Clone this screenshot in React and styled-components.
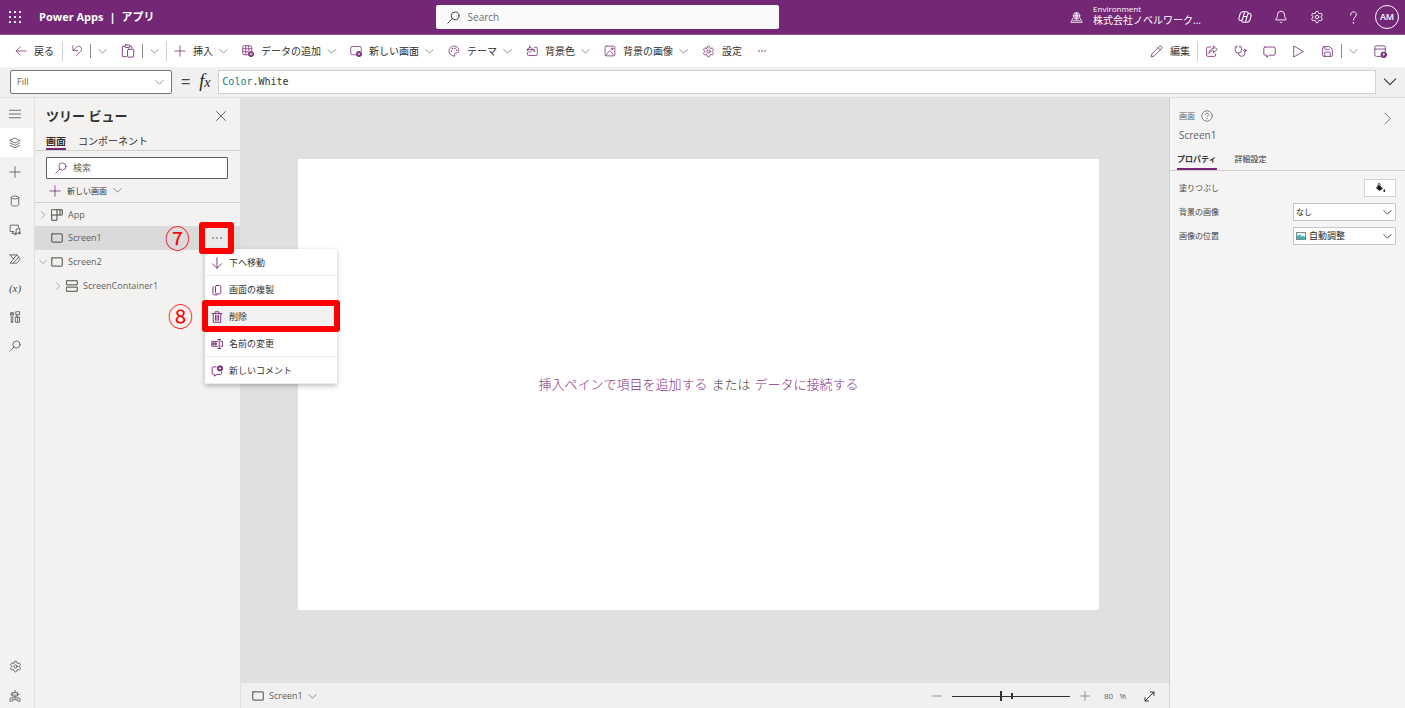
import React, { useState } from 'react';
import styled, { createGlobalStyle } from 'styled-components';
import { Bell, Palette, Pencil, Save, Settings, Stethoscope } from 'lucide-react';

const GlobalStyle = createGlobalStyle`
  *, *::before, *::after {
    box-sizing: border-box;
  }

  body {
    margin: 0;
    font-family: "Open Sans", "Noto Sans CJK JP", sans-serif;
    font-size: 9px;
    line-height: 14px;
    color: #323130;
  }

  button, input, select {
    margin: 0;
    padding: 0;
    border: 0;
    background: none;
    font: inherit;
    color: inherit;
  }

  button {
    display: flex;
    align-items: center;
    white-space: nowrap;
    cursor: pointer;
  }

  a {
    text-decoration: none;
  }

  svg {
    display: block;
    flex: none;
  }
`;

const purple = '#742774';

/* ---------- icons, drawn on a 16 unit grid ---------- */

const Svg = styled.svg`
  fill: none;
  stroke: ${({ $color }) => $color || 'currentColor'};
  stroke-width: ${({ $weight }) => $weight || 1};
  stroke-linecap: round;
  stroke-linejoin: round;
`;

const shapes = {
  back: <path d="M15 8H1.500M7 2.500 1.500 8 7 13.500" />,
  undo: <path d="M2.500 1v6.500H9M2.800 7.200 7 3c2-1.800 4.500-1.800 6 0s1.300 4.200-.5 6L7 14.500" />,
  paste: (
    <>
      <path d="M6 14.500H2.500a1 1 0 0 1-1-1v-10a1 1 0 0 1 1-1H4m6 0h1.500a1 1 0 0 1 1 1V5" />
      <rect x="4.500" y="1" width="5.500" height="3" rx="1" />
      <rect x="7.500" y="6" width="7" height="9" rx="1" />
    </>
  ),
  plus: <path d="M8 1v14M1 8h14" />,
  minus: <path d="M1 8h14" />,
  table: (
    <>
      <path d="M8 13H3a2 2 0 0 1-2-2V3a2 2 0 0 1 2-2h8a2 2 0 0 1 2 2v5M1 5h12M1 9h7M5 1v12M9 1v7" />
      <circle cx="12" cy="12" r="3.500" fill="currentColor" />
      <path d="M12 10.300v3.400M10.300 12h3.400" stroke="#fff" />
    </>
  ),
  screenAdd: (
    <>
      <path d="M8 13H3a2 2 0 0 1-2-2V4a2 2 0 0 1 2-2h10a2 2 0 0 1 2 2v4" />
      <circle cx="12" cy="12" r="3.500" fill="currentColor" />
      <path d="M12 10.800v2.400M10.800 12h2.400" stroke="#fff" />
    </>
  ),
  publish: (
    <>
      <path d="M8 14H3a2 2 0 0 1-2-2V3a2 2 0 0 1 2-2h9a2 2 0 0 1 2 2v5M1 5h13" />
      <circle cx="12" cy="12" r="3.500" fill="currentColor" />
      <path d="M12 13.600v-3M10.700 11.700 12 10.400l1.300 1.300" stroke="#fff" />
    </>
  ),
  fillColor: (
    <>
      <path d="M11 3h3a1 1 0 0 1 1 1v9a1 1 0 0 1-1 1H3a1 1 0 0 1-1-1v-3" />
      <path d="M5 1v3M1.500 6 5.500 2.500l4 3.500-4 3.500zM1.500 6h8M11 6.500c1 1.300 1 2.500 0 2.500s-1-1.200 0-2.500z" />
    </>
  ),
  image: (
    <>
      <rect x="1.500" y="1.500" width="13" height="13" rx="1.500" />
      <path d="m2.500 14 4-5.500a1.500 1.500 0 0 1 2.500 0l4 5.500" />
      <circle cx="10.800" cy="5" r="1.200" />
    </>
  ),
  share: (
    <>
      <path d="M7 2.500H3.500A1.500 1.500 0 0 0 2 4v8.500A1.500 1.500 0 0 0 3.500 14h8a1.500 1.500 0 0 0 1.500-1.500V11" />
      <path d="M10.500 1.500 15 5.500l-4.500 4V7C7.500 7 6 8 5 10.500 5 7 7 4.300 10.500 4z" />
    </>
  ),
  comment: <path d="M2.500 2.500h11a1.500 1.500 0 0 1 1.500 1.500v7a1.500 1.500 0 0 1-1.500 1.500H8L4.500 15v-2.500h-2A1.500 1.500 0 0 1 1 11V4a1.500 1.500 0 0 1 1.500-1.500z" />,
  play: <path d="M2.500 1.500 14 8 2.500 14.500z" />,
  search: (
    <>
      <circle cx="10" cy="6" r="4.800" />
      <path d="M6.500 9.500 1 15" />
    </>
  ),
  close: <path d="m2 2 12 12M14 2 2 14" />,
  chevron: <path d="M1.500 4.500 8 11l6.500-6.500" />,
  chevronRight: <path d="M5 1.500 11.500 8 5 14.500" />,
  environment: (
    <>
      <circle cx="8" cy="6" r="4" />
      <path d="M4 6h8M8 2v8M8 2C5.800 4 5.800 8 8 10M8 2c2.200 2 2.200 6 0 8" />
      <path d="M3.500 9 1 14h14l-2.500-5M3.500 12h9" />
    </>
  ),
  copilot: (
    <>
      <path d="M4.500 12H3.200C1.500 12 .6 10.500 1.100 9l1.500-5C3.200 2.500 4.300 2 5.800 2H10c1 0 1.500.6 1.800 1.500L12 4" />
      <path d="M11.500 4h1.300c1.700 0 2.600 1.500 2.100 3l-1.500 5c-.6 1.500-1.700 2-3.200 2H6c-1 0-1.500-.6-1.800-1.500L4 12" />
      <path d="M7.500 2.200 5.300 10c-.4 1.300-1 2-2 2M8.500 13.800 10.700 6c.4-1.300 1-2 2-2M6 7.500h4" />
    </>
  ),
  help: (
    <>
      <path d="M4.500 5C4.500 2.500 6 1 8 1s3.500 1.500 3.500 3.500c0 3-3.500 3-3.500 6.500" />
      <path d="M8 14.500v.2" strokeWidth="1.800" />
    </>
  ),
  menu: <path d="M.5 3h15M.5 8h15M.5 13h15" />,
  layers: <path d="m8 1.500 6.500 3.200L8 8 1.500 4.700zM1.500 8 8 11.200 14.500 8M1.500 11.200 8 14.500l6.500-3.300" />,
  data: (
    <>
      <ellipse cx="8" cy="3.300" rx="5" ry="2" />
      <path d="M3 3.300v9.500c0 1.100 2.200 1.900 5 1.900s5-.8 5-1.900V3.300" />
    </>
  ),
  media: (
    <>
      <path d="M6 10H1.500V1.500h11V5M4 12.500h2M5 10v2.500" />
      <path d="M9.500 13V7l5-1v6" />
      <circle cx="8.300" cy="13.200" r="1.300" />
      <circle cx="13.300" cy="12.200" r="1.300" />
    </>
  ),
  flow: <path d="M1.500 2.500h9L15 8l-4.500 5.500h-9L10.500 2.500M1.500 2.500 6 8M5.500 13.500 13 5.500" />,
  tools: (
    <>
      <path d="M3 15V7C1.500 6 1.500 3 3 1.500V5h2V1.500C6.500 3 6.500 6 5 7v8z" />
      <path d="M9 1.500V5h5V1.500zM10.500 5v3M9 8h5v7H9zM11.500 8v7" />
    </>
  ),
  agent: (
    <>
      <path d="M8 .5v2.500M4.500 3.500h7V8h-7zM2.500 5.700h2M11.500 5.700h2M6.500 5.700v.2M9.500 5.700v.2M8 8v2.500" />
      <path d="M1.500 15.500v-4a1 1 0 0 1 1-1h11a1 1 0 0 1 1 1v4M4 15.500V13h8v2.500" />
    </>
  ),
  app: <path d="M1 1h14v7H1zM1 8v7h7V1M12 1v7" />,
  screen: <rect x="1" y="2.500" width="14" height="11" rx=".5" />,
  container: <path d="M1 1h14v5.500H1zM1 9.500h14V15H1z" />,
  down: <path d="M8 1v14M2 9l6 6 6-6" />,
  copy: (
    <>
      <rect x="6" y="2" width="7" height="11" rx="1.500" />
      <path d="M4 3.500c-1 0-1.500.8-1.500 1.500v7.500a2 2 0 0 0 2 2H8" />
    </>
  ),
  trash: <path d="M1.500 3.500h13M5.500 3.500V1h5v2.500M3 3.500V15h10V3.500M6 6v6.500M8 6v6.500M10 6v6.500" />,
  rename: <path d="M9 4.500H1v6.500h8M3 6.500h4v2.500H3zM3 7.700h4M9 2h4M11 2v12M9 14h4M13 4.500h2.300V11H13" />,
  commentAdd: (
    <>
      <path d="M7 2.500H3A1.500 1.500 0 0 0 1.500 4v7A1.500 1.500 0 0 0 3 12.500h1.500V15L8 12.500h4.500A1.500 1.500 0 0 0 14 11V9.500" />
      <circle cx="12" cy="4.500" r="3.500" fill="currentColor" />
      <path d="M12 3.300v2.400M10.800 4.500h2.400" stroke="#fff" />
    </>
  ),
  info: (
    <>
      <circle cx="8" cy="8" r="7" />
      <path d="M6 6.300c0-1.300.9-2 2-2s2 .7 2 1.800c0 1.400-2 1.500-2 3.200M8 11.500v.2" />
    </>
  ),
  expand: <path d="M1.500 14.500 14.500 1.500M9.500 1.500h5v5M1.500 9.500v5h5" />,
};

const Icon = ({ name, size = 12, color, weight }) => (
  <Svg width={size} height={size} viewBox="0 0 16 16" $color={color} $weight={weight} color={color} aria-hidden="true">
    {shapes[name]}
  </Svg>
);

const Chevron = () => <Icon name="chevron" size={9} color="#605e5c" weight={1.2} />;

/* ---------- header ---------- */

const Page = styled.div`
  display: flex;
  flex-direction: column;
  min-height: 100vh;
  background: #f3f2f1;
`;

const Header = styled.header`
  display: grid;
  grid-template-columns: 31% 343px 1fr;
  align-items: center;
  height: 35px;
  background: ${purple};
  border-bottom: 1px solid #8f4b8f;
  color: #fff;
`;

const Brand = styled.div`
  display: flex;
  align-items: center;
  gap: 18px;
  padding-left: 9px;
`;

const BrandText = styled.span`
  display: flex;
  gap: 6px;
  font-size: 11px;
  font-weight: 700;
`;

const WaffleSvg = styled.svg`
  fill: #fff;
`;

const SearchBox = styled.label`
  display: flex;
  align-items: center;
  gap: 8px;
  height: 24px;
  padding: 0 11px;
  border-radius: 2px;
  background: #fafafa;
  color: #242424;
  font-size: 10px;

  input {
    flex: 1;
    min-width: 0;
    outline: none;
  }

  input::placeholder {
    color: #707070;
    opacity: 1;
  }
`;

const HeaderTools = styled.div`
  display: flex;
  align-items: center;
  justify-content: flex-end;
  padding-right: 6px;
`;

const Environment = styled.button`
  gap: 10px;
  margin-right: 26px;
  text-align: left;
`;

const EnvironmentText = styled.span`
  display: flex;
  flex-direction: column;
  padding-bottom: 4px;
  font-size: 10px;
  line-height: 12px;

  small {
    font-size: 8px;
    line-height: 10px;
  }
`;

const HeaderButton = styled.button`
  justify-content: center;
  width: 36px;
  height: 34px;
`;

const Avatar = styled.button`
  justify-content: center;
  width: 24px;
  height: 24px;
  margin-left: 4px;
  border: 1px solid #fff;
  border-radius: 50%;
  font-size: 9px;
  font-weight: 600;
`;

/* ---------- command bar ---------- */

const CommandBar = styled.nav`
  display: flex;
  align-items: center;
  height: 32px;
  padding: 0 18px 0 15px;
  background: #fff;
  color: ${purple};
`;

const CommandGroup = styled.div`
  display: flex;
  align-items: center;
  gap: ${({ $gap }) => $gap}px;
  margin-left: ${({ $end }) => ($end ? 'auto' : '0')};
`;

const Command = styled.button`
  color: ${purple};
  font-size: 10px;

  span {
    margin: 0 6px 0 7px;
    color: #323130;
  }

  span:last-child {
    margin-right: 0;
  }
`;

const Divider = styled.i`
  flex: none;
  width: 1px;
  height: ${({ $short }) => ($short ? 14 : 20)}px;
  margin: 0 ${({ $space }) => $space || 0}px;
  background: ${({ $short }) => ($short ? '#8a8886' : '#d2d0ce')};
`;

/* ---------- formula bar ---------- */

const FormulaBar = styled.div`
  display: flex;
  align-items: center;
  height: 31px;
  padding: 0 8px 0 10px;
  background: #f0f0f0;
  border-bottom: 1px solid #e1dfdd;
`;

const SelectBox = styled.div`
  display: grid;
  align-items: center;
  width: ${({ $width }) => $width}px;
  height: ${({ $height }) => $height}px;
  border: 1px solid ${({ $border }) => $border};
  border-radius: ${({ $radius }) => $radius || 0}px;
  background: #fff;

  > * {
    grid-area: 1 / 1;
  }

  > svg {
    justify-self: end;
    margin-right: ${({ $inset }) => $inset}px;
    pointer-events: none;
  }

  > svg:first-child {
    justify-self: start;
    margin-left: 2px;
  }
`;

const Select = styled.select`
  width: 100%;
  height: 100%;
  padding-left: ${({ $pad }) => $pad}px;
  appearance: none;
  color: ${({ $muted }) => ($muted ? '#605e5c' : '#201f1e')};
  font-size: ${({ $small }) => ($small ? 8 : 9)}px;
`;

const Equals = styled.span`
  margin: 0 9px;
  font-family: "Liberation Sans", sans-serif;
  font-size: 16px;
  color: #484644;
`;

const Fx = styled.span`
  width: 19px;
  font-family: "Liberation Serif", serif;
  font-size: 18px;
  font-style: italic;
  color: #201f1e;

  small {
    font-size: 14px;
  }
`;

const Formula = styled.div`
  display: grid;
  flex: 1;
  align-items: center;
  height: 24px;
  padding: 0 3px;
  border: 1px solid #d2d0ce;
  background: #fffffe;
  font-family: "DejaVu Sans Mono", monospace;
  font-size: 10px;

  > * {
    grid-area: 1 / 1;
  }

  input {
    color: transparent;
    caret-color: #323130;
    outline: none;
  }
`;

const Highlight = styled.span`
  pointer-events: none;
  white-space: pre;

  b {
    font-weight: 400;
    color: #098080;
  }
`;

const ExpandFormula = styled.button`
  margin-left: 7px;
`;

/* ---------- left side ---------- */

const Body = styled.div`
  display: flex;
  flex: 1;
`;

const Rail = styled.nav`
  display: flex;
  flex-direction: column;
  justify-content: space-between;
  width: 35px;
  border-right: 1px solid #e1dfdd;
`;

const RailGroup = styled.div`
  display: flex;
  flex-direction: column;
  padding-top: 1px;
  gap: ${({ $gap }) => $gap || 0}px;
`;

const RailButton = styled.button`
  justify-content: center;
  width: 33px;
  height: ${({ $small }) => ($small ? 24 : 29)}px;
  padding-right: 3px;
  background: ${({ $active }) => ($active ? '#fff' : 'none')};
  color: #484644;
`;

const Variable = styled.span`
  font-family: "Liberation Serif", serif;
  font-size: 11px;
  font-style: italic;
`;

const TreePanel = styled.aside`
  width: 206px;
  border-right: 1px solid #e1dfdd;
`;

const TreeTitle = styled.div`
  display: flex;
  align-items: center;
  justify-content: space-between;
  height: 36px;
  padding: 0 13px 0 11px;

  h2 {
    margin: 0;
    font-size: 13px;
    font-weight: 700;
  }
`;

const Tabs = styled.div`
  display: flex;
  gap: ${({ $gap }) => $gap}px;
  padding-left: ${({ $pad }) => $pad}px;
  border-bottom: 1px solid #d2d0ce;
`;

const Tab = styled.button`
  height: ${({ $tall }) => ($tall ? 20 : 16)}px;
  border-bottom: 2px solid ${({ $active }) => ($active ? purple : 'transparent')};
  font-size: ${({ $tall }) => ($tall ? 8 : 10)}px;
  font-weight: ${({ $active }) => ($active ? 700 : 400)};
`;

const TreeSearch = styled.label`
  display: flex;
  align-items: center;
  gap: 6px;
  height: 22px;
  margin: 6px 12px 0 11px;
  padding: 0 8px;
  border: 1px solid #605e5c;
  border-radius: 1px;
  background: #fff;

  input {
    flex: 1;
    min-width: 0;
    outline: none;
  }

  input::placeholder {
    color: #605e5c;
    opacity: 1;
  }
`;

const NewScreen = styled.button`
  gap: 6px;
  height: 23px;
  padding-left: 14px;
  font-size: 8px;
`;

const TreeList = styled.ul`
  margin: 0;
  padding: 0;
  border-top: 1px solid #d2d0ce;
  list-style: none;
`;

const TreeRow = styled.li`
  display: flex;
  align-items: center;
  gap: 4px;
  height: ${({ $first }) => ($first ? 23 : 24)}px;
  padding: 0 12px 0 ${({ $level }) => 4 + $level * 15}px;
  background: ${({ $active }) => ($active ? '#dadada' : 'none')};
  color: #605e5c;
`;

const Twisty = styled.span`
  width: 8px;
`;

const TreeName = styled.span`
  flex: 1;
  margin-left: 1px;
`;

const MoreAnchor = styled.div`
  position: relative;
  z-index: 2;
`;

const MoreButton = styled.button`
  justify-content: center;
  width: 23px;
  height: 20px;
  background: #ebebeb;
`;

const Menu = styled.ul`
  position: absolute;
  top: 21px;
  left: 0;
  width: 132px;
  margin: 0;
  padding: 0;
  background: #fff;
  box-shadow: 0 2px 5px rgba(0, 0, 0, 0.25);
  list-style: none;
`;

const MenuItem = styled.li`
  position: relative;
  border-bottom: 1px solid #edebe9;
  background: ${({ $active }) => ($active ? '#f3f2f1' : 'none')};

  button {
    gap: 6px;
    width: 100%;
    height: 26px;
    padding: 1px 0 0 6px;
    color: ${purple};
  }

  span {
    color: #323130;
  }
`;

const Callout = styled.div`
  position: absolute;
  inset: -${({ $spread }) => $spread}px;
  z-index: 3;
  border: 6px solid #f00;
  border-radius: 3px;
  pointer-events: none;
`;

const CalloutNumber = styled.strong`
  position: absolute;
  right: calc(100% + 15px);
  bottom: calc(50% - 12px);
  font-family: "Noto Sans CJK JP", sans-serif;
  font-size: 25px;
  font-weight: 400;
  line-height: 26px;
  color: #f00;
`;

/* ---------- canvas ---------- */

const Stage = styled.main`
  display: flex;
  flex: 1;
  flex-direction: column;
  min-width: 0;
  background: #e0e0e0;
`;

const Board = styled.div`
  flex: 1;
  padding: 61px 70px 20px 57px;
`;

const Artboard = styled.section`
  display: flex;
  align-items: center;
  justify-content: center;
  gap: 4px;
  aspect-ratio: 16 / 9;
  background: #fff;
  font-size: 13px;
  font-weight: 300;
  color: #484644;

  a {
    color: #8a2f8a;
  }
`;

const StatusBar = styled.footer`
  display: flex;
  align-items: center;
  justify-content: space-between;
  height: 25px;
  padding: 1px 14px 0 11px;
  background: #f0f0f0;
  color: #605e5c;
`;

const ScreenPicker = styled.button`
  gap: 5px;
`;

const Zoom = styled.div`
  display: flex;
  align-items: center;
  gap: 10px;
`;

const ZoomTrack = styled.div`
  position: relative;
  display: flex;
  width: 118px;

  &::after {
    content: "";
    position: absolute;
    top: 5px;
    left: 50%;
    width: 2px;
    height: 6px;
    background: #323130;
  }

  input {
    width: 100%;
    height: 16px;
    appearance: none;
  }

  input::-webkit-slider-runnable-track {
    height: 1px;
    background: #323130;
  }

  input::-webkit-slider-thumb {
    width: 2px;
    height: 10px;
    margin-top: -5px;
    appearance: none;
    background: #323130;
  }
`;

const ZoomValue = styled.output`
  margin: 0 8px 0 4px;
  font-size: 8px;
  white-space: pre;
`;

/* ---------- properties ---------- */

const Properties = styled.aside`
  width: 236px;
  border-left: 1px solid #d2d0ce;
  background: #f4f4f4;
`;

const PropertiesHead = styled.div`
  display: flex;
  align-items: flex-start;
  justify-content: space-between;
  height: 52px;
  padding: 11px 11px 0 9px;
  color: #605e5c;
`;

const Kind = styled.div`
  display: flex;
  align-items: center;
  gap: 6px;
  font-size: 8px;
`;

const Selected = styled.div`
  margin-top: 5px;
  font-size: 10px;
`;

const Collapse = styled.button`
  margin-top: 3px;
`;

const Field = styled.div`
  display: flex;
  align-items: center;
  justify-content: space-between;
  height: 24px;
  padding: 0 9px;

  > label, > span {
    font-size: 8px;
    color: #484644;
  }
`;

const Fields = styled.div`
  padding-top: 5px;
`;

const Swatch = styled.button`
  justify-content: center;
  width: 32px;
  height: 18px;
  border: 1px solid #d2d0ce;
  background: #fff;
`;

const commands = [
  { label: '挿入', icon: <Icon name="plus" />, menu: true },
  { label: 'データの追加', icon: <Icon name="table" />, menu: true },
  { label: '新しい画面', icon: <Icon name="screenAdd" />, menu: true },
  { label: 'テーマ', icon: <Palette size={12} strokeWidth={1.5} />, menu: true },
  { label: '背景色', icon: <Icon name="fillColor" />, menu: true },
  { label: '背景の画像', icon: <Icon name="image" />, menu: true },
  { label: '設定', icon: <Settings size={13} strokeWidth={1.5} /> },
];

const railItems = [
  ['メニュー', 'menu'],
  ['ツリー ビュー', 'layers'],
  ['挿入', 'plus'],
  ['データ', 'data'],
  ['メディア', 'media'],
  ['Power Automate', 'flow'],
  ['変数', null],
  ['高度なツール', 'tools'],
  ['検索', 'search'],
];

const menuItems = [
  ['下へ移動', 'down'],
  ['画面の複製', 'copy'],
  ['削除', 'trash'],
  ['名前の変更', 'rename'],
  ['新しいコメント', 'commentAdd'],
];

const Dots = ({ color = purple, gap = 4 }) => (
  <svg width="12" height="4" viewBox="0 0 12 4" fill={color} aria-hidden="true">
    {[-1, 0, 1].map(n => <circle key={n} cx={6 + n * gap} cy="2" r=".8" />)}
  </svg>
);

const Waffle = () => (
  <WaffleSvg width="12" height="12" viewBox="0 0 12 12" aria-hidden="true">
    {[0, 5, 10].map(y => [0, 5, 10].map(x => <rect key={`${x}-${y}`} x={x} y={y} width="2" height="2" rx=".6" />))}
  </WaffleSvg>
);

const TopBar = () => (
  <Header>
    <Brand>
      <button aria-label="アプリ起動ツール"><Waffle /></button>
      <BrandText><span>Power Apps</span><span>|</span><span>アプリ</span></BrandText>
    </Brand>
    <SearchBox>
      <Icon name="search" size={13} />
      <input type="search" placeholder="Search" aria-label="Search" />
    </SearchBox>
    <HeaderTools>
      <Environment>
        <Icon name="environment" size={13} />
        <EnvironmentText>
          <small>Environment</small>
          株式会社ノベルワーク...
        </EnvironmentText>
      </Environment>
      <HeaderButton aria-label="Copilot"><Icon name="copilot" size={14} weight={1.2} /></HeaderButton>
      <HeaderButton aria-label="通知"><Bell size={14} strokeWidth={1.6} /></HeaderButton>
      <HeaderButton aria-label="設定"><Settings size={14} strokeWidth={1.6} /></HeaderButton>
      <HeaderButton aria-label="ヘルプ"><Icon name="help" size={13} weight={1.2} /></HeaderButton>
      <Avatar>AM</Avatar>
    </HeaderTools>
  </Header>
);

const Commands = () => (
  <CommandBar>
    <CommandGroup $gap={14}>
      <CommandGroup $gap={8}>
        <Command><Icon name="back" /><span>戻る</span></Command>
        <Divider />
        <CommandGroup $gap={7}>
          <Command aria-label="元に戻す"><Icon name="undo" /></Command>
          <Divider $short />
          <Command aria-label="元に戻す オプション"><Chevron /></Command>
        </CommandGroup>
      </CommandGroup>
      <CommandGroup $gap={7}>
        <Command aria-label="貼り付け"><Icon name="paste" size={14} /></Command>
        <Divider $short />
        <Command aria-label="貼り付け オプション"><Chevron /></Command>
      </CommandGroup>
    </CommandGroup>
    <Divider $space={7} />
    <CommandGroup $gap={14}>
      {commands.map(({ label, icon, menu }) => (
        <Command key={label}>{icon}<span>{label}</span>{menu && <Chevron />}</Command>
      ))}
      <Command aria-label="その他"><Dots gap={3} /></Command>
    </CommandGroup>
    <CommandGroup $gap={16} $end>
      <CommandGroup $gap={7}>
        <Command><Pencil size={13} strokeWidth={1.5} /><span>編集</span></Command>
        <Divider />
        <Command aria-label="共有"><Icon name="share" size={13} /></Command>
      </CommandGroup>
      <Command aria-label="アプリ チェッカー"><Stethoscope size={13} strokeWidth={1.5} /></Command>
      <Command aria-label="コメント"><Icon name="comment" size={13} /></Command>
      <Command aria-label="プレビュー"><Icon name="play" size={13} /></Command>
      <CommandGroup $gap={7}>
        <Command aria-label="保存"><Save size={13} strokeWidth={1.5} /></Command>
        <Divider $short />
        <Command aria-label="保存 オプション"><Chevron /></Command>
      </CommandGroup>
      <Command aria-label="公開"><Icon name="publish" size={13} /></Command>
    </CommandGroup>
  </CommandBar>
);

const FormulaRow = () => {
  const [formula, setFormula] = useState('Color.White');
  const [head, ...rest] = formula.split('.');

  return (
    <FormulaBar>
      <SelectBox $width={162} $height={24} $border="#797775" $radius={2} $inset={7}>
        <Select $pad={6} $muted aria-label="プロパティ" defaultValue="Fill">
          <option>Fill</option>
        </Select>
        <Chevron />
      </SelectBox>
      <Equals>=</Equals>
      <Fx>f<small>x</small></Fx>
      <Formula>
        <input aria-label="数式" value={formula} onChange={e => setFormula(e.target.value)} />
        <Highlight aria-hidden="true"><b>{head}</b>{rest.length > 0 && `.${rest.join('.')}`}</Highlight>
      </Formula>
      <ExpandFormula aria-label="数式バーの展開"><Icon name="chevron" size={14} weight={1.2} /></ExpandFormula>
    </FormulaBar>
  );
};

const ScreenMenu = () => (
  <Menu>
    {menuItems.map(([label, icon]) => (
      <MenuItem key={label} $active={icon === 'trash'}>
        <button><Icon name={icon} size={12} weight={1.2} /><span>{label}</span></button>
        {icon === 'trash' && <Callout $spread={3}><CalloutNumber>⑧</CalloutNumber></Callout>}
      </MenuItem>
    ))}
  </Menu>
);

const TreeView = () => (
  <TreePanel>
    <TreeTitle>
      <h2>ツリー ビュー</h2>
      <button aria-label="閉じる"><Icon name="close" size={12} /></button>
    </TreeTitle>
    <Tabs $gap={12} $pad={11}>
      <Tab $active>画面</Tab>
      <Tab>コンポーネント</Tab>
    </Tabs>
    <TreeSearch>
      <Icon name="search" size={12} color={purple} />
      <input type="search" placeholder="検索" aria-label="検索" />
    </TreeSearch>
    <NewScreen><Icon name="plus" color={purple} />新しい画面<Chevron /></NewScreen>
    <TreeList>
      <TreeRow $level={0} $first>
        <Twisty><Icon name="chevronRight" size={8} /></Twisty>
        <Icon name="app" weight={1.3} color="#484644" />
        <TreeName>App</TreeName>
      </TreeRow>
      <TreeRow $level={0} $active>
        <Twisty />
        <Icon name="screen" weight={1.3} color="#484644" />
        <TreeName>Screen1</TreeName>
        <MoreAnchor>
          <MoreButton aria-label="その他"><Dots color="#484644" /></MoreButton>
          <ScreenMenu />
          <Callout $spread={6}><CalloutNumber>⑦</CalloutNumber></Callout>
        </MoreAnchor>
      </TreeRow>
      <TreeRow $level={0}>
        <Twisty><Icon name="chevron" size={8} /></Twisty>
        <Icon name="screen" weight={1.3} color="#484644" />
        <TreeName>Screen2</TreeName>
      </TreeRow>
      <TreeRow $level={1}>
        <Twisty><Icon name="chevronRight" size={8} /></Twisty>
        <Icon name="container" weight={1.3} color="#484644" />
        <TreeName>ScreenContainer1</TreeName>
      </TreeRow>
    </TreeList>
  </TreePanel>
);

const CanvasArea = () => (
  <Stage>
    <Board>
      <Artboard>
        <a href="#insert">挿入ペインで項目を追加する</a>
        <span>または</span>
        <a href="#data">データに接続する</a>
      </Artboard>
    </Board>
    <StatusBar>
      <ScreenPicker><Icon name="screen" weight={1.3} color="#484644" />Screen1<Chevron /></ScreenPicker>
      <Zoom>
        <button aria-label="縮小"><Icon name="minus" size={10} /></button>
        <ZoomTrack>
          <input type="range" aria-label="ズーム" min="0" max="192" defaultValue="80" />
        </ZoomTrack>
        <button aria-label="拡大"><Icon name="plus" size={10} /></button>
        <ZoomValue>{'80   %'}</ZoomValue>
        <button aria-label="画面に合わせる"><Icon name="expand" size={11} color="#201f1e" weight={1.3} /></button>
      </Zoom>
    </StatusBar>
  </Stage>
);

const PropertyPane = () => (
  <Properties>
    <PropertiesHead>
      <div>
        <Kind>画面<Icon name="info" /></Kind>
        <Selected>Screen1</Selected>
      </div>
      <Collapse aria-label="折りたたむ"><Icon name="chevronRight" size={13} /></Collapse>
    </PropertiesHead>
    <Tabs $gap={18} $pad={7}>
      <Tab $tall $active>プロパティ</Tab>
      <Tab $tall>詳細設定</Tab>
    </Tabs>
    <Fields>
      <Field>
        <span>塗りつぶし</span>
        <Swatch aria-label="塗りつぶし">
          <svg width="12" height="12" viewBox="0 0 12 12" aria-hidden="true">
            <path d="M5 3 9 6.500 5.500 9 2 6z" fill="#201f1e" />
            <path d="M4 5V2.500a1 1 0 0 1 2 0V5" fill="none" stroke="#201f1e" strokeWidth=".8" />
            <path d="M10.300 7c1.300 1.800 1.300 3 0 3s-1.300-1.200 0-3z" fill="#201f1e" />
          </svg>
        </Swatch>
      </Field>
      <Field>
        <label htmlFor="bg-image">背景の画像</label>
        <SelectBox $width={103} $height={18} $border="#c8c6c4" $inset={3}>
          <Select id="bg-image" $pad={2} $small defaultValue="なし"><option>なし</option></Select>
          <Icon name="chevron" size={9} weight={1.6} />
        </SelectBox>
      </Field>
      <Field>
        <label htmlFor="image-position">画像の位置</label>
        <SelectBox $width={103} $height={18} $border="#c8c6c4" $inset={3}>
          <svg width="10" height="8" viewBox="0 0 10 8" aria-hidden="true">
            <rect x=".5" y=".5" width="9" height="7" fill="#e8f6f7" stroke="#7a8a8a" />
            <path d="M1 4 3.500 2.500 6 4.500 7.500 4 9 5v2H1z" fill="#3bb3ae" />
          </svg>
          <Select id="image-position" $pad={15} defaultValue="自動調整"><option>自動調整</option></Select>
          <Icon name="chevron" size={9} weight={1.6} />
        </SelectBox>
      </Field>
    </Fields>
  </Properties>
);

const App = () => (
  <Page>
    <GlobalStyle />
    <TopBar />
    <Commands />
    <FormulaRow />
    <Body>
      <Rail>
        <RailGroup>
          {railItems.map(([label, icon]) => (
            <RailButton key={label} aria-label={label} $active={icon === 'layers'}>
              {icon ? <Icon name={icon} /> : <Variable>(x)</Variable>}
            </RailButton>
          ))}
        </RailGroup>
        <RailGroup $gap={6}>
          <RailButton $small aria-label="設定"><Settings size={13} strokeWidth={1.5} /></RailButton>
          <RailButton $small aria-label="仮想エージェント"><Icon name="agent" /></RailButton>
        </RailGroup>
      </Rail>
      <TreeView />
      <CanvasArea />
      <PropertyPane />
    </Body>
  </Page>
);

export default App;
